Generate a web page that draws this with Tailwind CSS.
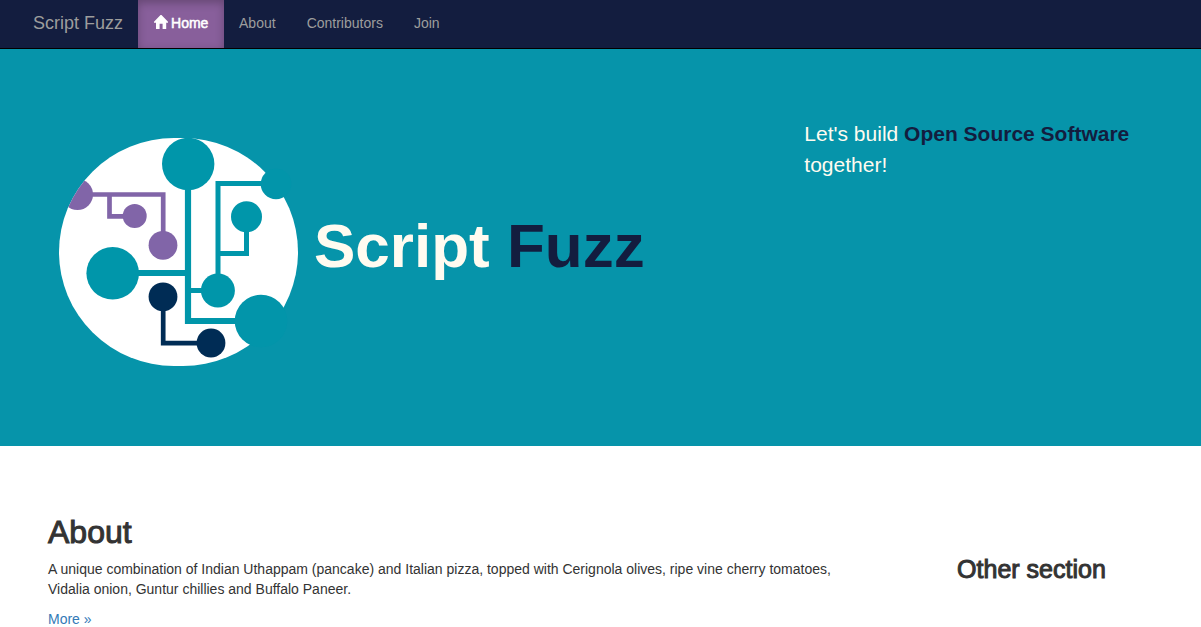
<!DOCTYPE html>
<html lang="en">
<head>
<meta charset="utf-8">
<meta name="viewport" content="width=device-width, initial-scale=1">
<title>Script Fuzz</title>
<script src="https://cdn.jsdelivr.net/npm/@tailwindcss/browser@4"></script>
</head>
<body class="bg-white font-['Liberation_Sans',Arial,sans-serif] text-sm leading-5 text-[#333]">
<nav class="flex h-[49px] border-b border-black bg-[#131d3f] pl-[33px] text-[#9d9d9d]">
  <a href="#" class="pt-[13px] pr-[15px] text-lg leading-5">Script Fuzz</a>
  <a href="#" class="flex w-[86px] pt-[13px] pl-4 font-medium text-white bg-[#885f9b] shadow-[inset_0_3px_9px_rgba(0,0,0,0.25)]">
    <svg class="mt-[2px] mr-[3px] h-[14px] w-[14px]" viewBox="0 0 14 14" fill="currentColor" aria-hidden="true"><path d="M6.500 0H7.500L14 6.700V7.800H12.200V14H8.600V8.700H5.600V14H2V7.800H0V6.700Z"/></svg>
    <span class="[-webkit-text-stroke:0.5px_white]">Home</span>
  </a>
  <a href="#about" class="pt-[13px] pl-[15px] pr-4">About</a>
  <a href="#" class="pt-[13px] pl-[15px] pr-4">Contributors</a>
  <a href="#" class="pt-[13px] pl-[15px] pr-4">Join</a>
</nav>
<header class="flex bg-[#0694aa] pb-20 pl-[59px] pr-12 text-[#fffbf0]">
  <div class="flex w-2/3 pt-[89px]">
    <svg class="h-[228px] w-[239px] shrink-0" viewBox="59 138 239 228" role="img" aria-label="Script Fuzz logo">
      <defs><clipPath id="badge"><rect x="59" y="138" width="239" height="228" rx="115" ry="114"/></clipPath></defs>
      <rect x="59" y="138" width="239" height="228" rx="115" ry="114" fill="#fff"/>
      <g fill="none" stroke="#0096aa" stroke-width="5">
        <path d="M188 164V321H260M113 273H188" stroke-width="6.2"/>
        <path d="M275 183.500H218V291M188 290.500H218M218 253.500H246.500V217"/>
      </g>
      <g fill="#0096aa">
        <circle cx="188.200" cy="164" r="26.200"/><circle cx="246.500" cy="216.700" r="15.500"/>
        <circle cx="112.700" cy="273.300" r="26.300"/><circle cx="217.900" cy="290.500" r="17"/>
      </g>
      <g fill="#0295aa"><circle cx="276" cy="184" r="15.300"/><circle cx="261" cy="321" r="26.300"/></g>
      <g clip-path="url(#badge)">
        <path d="M77 194.500H163.200V245M109.500 194.500V216.300H134" fill="none" stroke="#8165a8" stroke-width="4.700"/>
        <g fill="#8165a8"><circle cx="77.500" cy="194.500" r="15.500"/><circle cx="134.700" cy="216" r="12"/><circle cx="163" cy="245.300" r="14.400"/></g>
        <path d="M163.200 297V343.200H211" fill="none" stroke="#002c55" stroke-width="4.700"/>
        <g fill="#002c55"><circle cx="163" cy="296.800" r="14.400"/><circle cx="211" cy="343" r="14.400"/></g>
      </g>
    </svg>
    <h1 class="pt-[72px] pl-[16px] text-[62px] leading-[72px] font-bold whitespace-nowrap">Script <span class="text-[#131d3f]">Fuzz</span></h1>
  </div>
  <p class="flex-1 pt-[69px] pl-[16px] text-[21px] leading-[31px]">Let's build <strong class="text-[#131d3f]">Open Source Software</strong> together!</p>
</header>
<main class="flex gap-10 px-12 pt-[70px]">
  <section id="about" class="flex-1">
    <h2 class="text-[32px] leading-[33px] [-webkit-text-stroke:1px_currentColor]">About</h2>
    <p class="mt-[10px]">A unique combination of Indian Uthappam (pancake) and Italian pizza, topped with Cerignola olives, ripe vine cherry tomatoes, Vidalia onion, Guntur chillies and Buffalo Paneer.</p>
    <a href="#" class="mt-[10px] block text-[#337ab7]">More »</a>
  </section>
  <aside class="w-[22%] pt-10 text-center"><h3 class="text-[25px] leading-[26px] [-webkit-text-stroke:1px_currentColor]">Other section</h3></aside>
</main>
</body>
</html>
